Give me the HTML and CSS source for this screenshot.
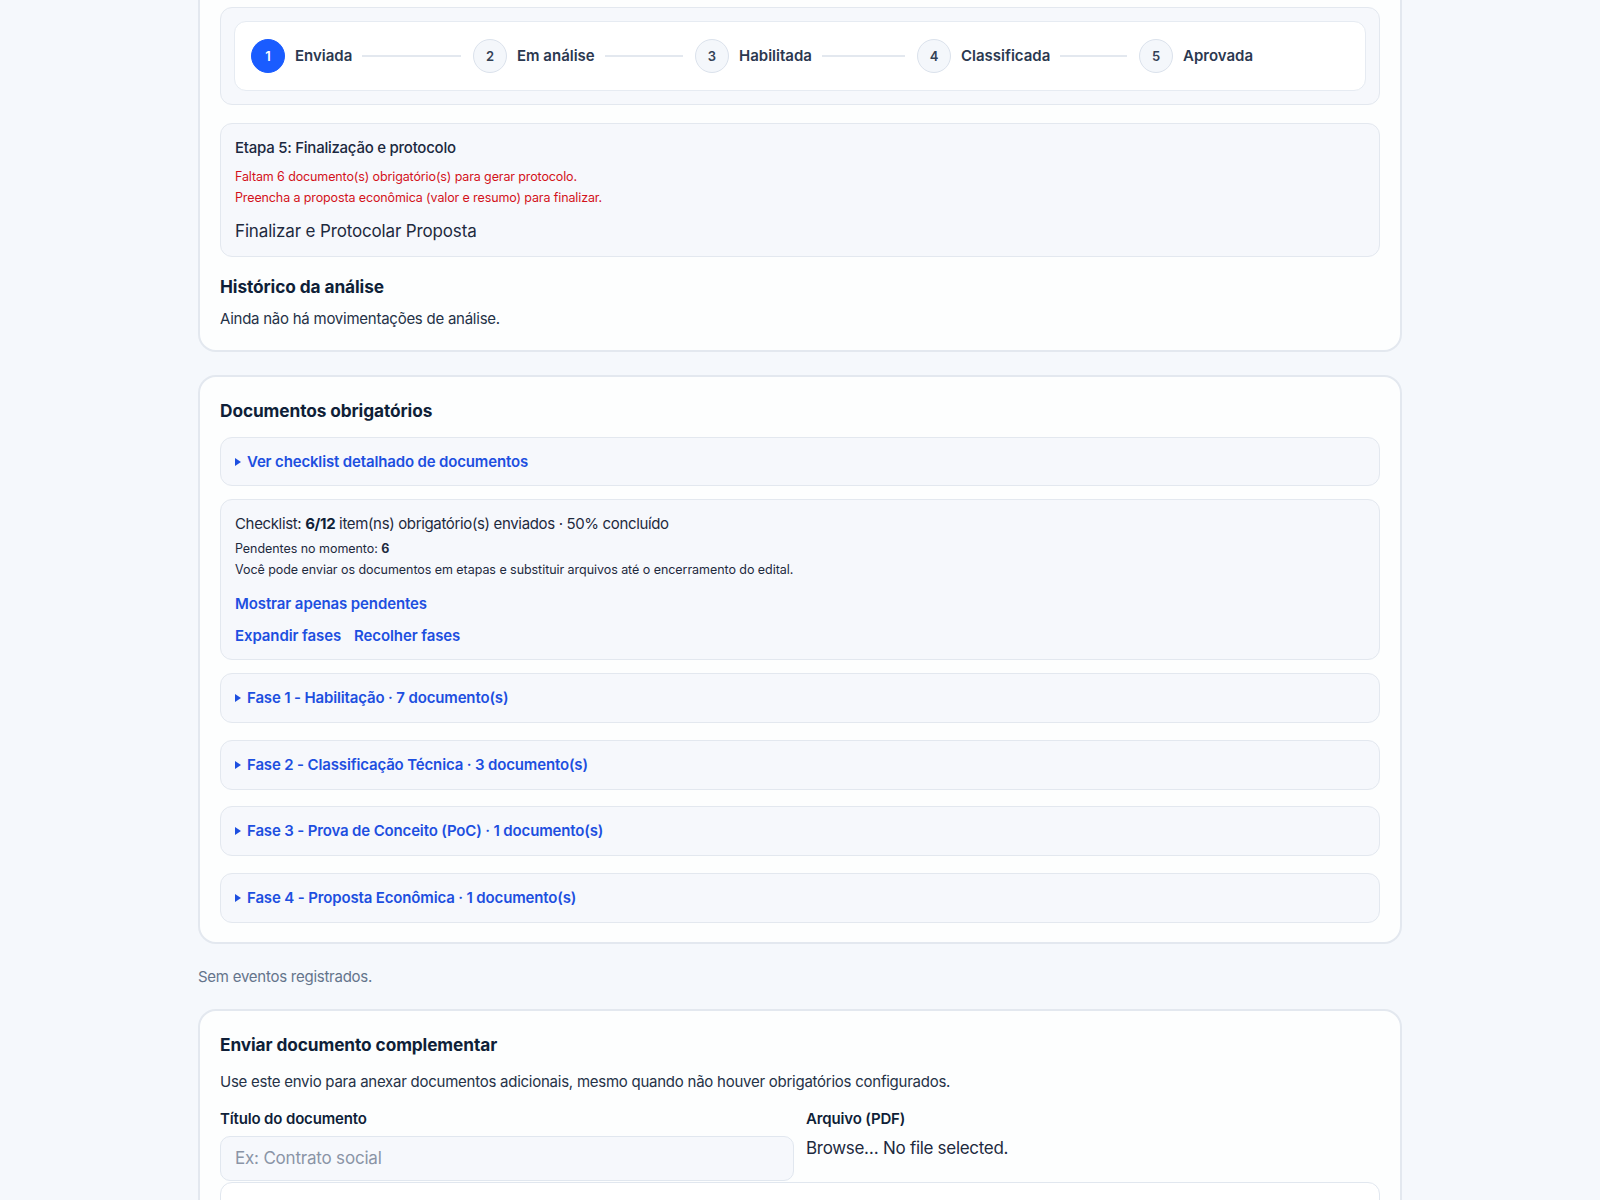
FILE: index.html
```html
<!DOCTYPE html>
<html lang="pt-BR">
<head>
<meta charset="utf-8">
<title>Proposta</title>
<link rel="stylesheet" href="styles.css">
</head>
<body>
<main class="page">
  <section class="card card-status">
    <div class="stepper-wrap">
      <ol class="stepper">
        <li class="step is-current"><span class="step-dot">1</span><span class="step-label">Enviada</span><span class="step-line"></span></li>
        <li class="step"><span class="step-dot">2</span><span class="step-label">Em análise</span><span class="step-line"></span></li>
        <li class="step"><span class="step-dot">3</span><span class="step-label">Habilitada</span><span class="step-line"></span></li>
        <li class="step"><span class="step-dot">4</span><span class="step-label">Classificada</span><span class="step-line"></span></li>
        <li class="step step-last"><span class="step-dot">5</span><span class="step-label">Aprovada</span></li>
      </ol>
    </div>

    <div class="panel finalize">
      <p class="finalize-title">Etapa 5: Finalização e protocolo</p>
      <p class="warn first">Faltam 6 documento(s) obrigatório(s) para gerar protocolo.</p>
      <p class="warn">Preencha a proposta econômica (valor e resumo) para finalizar.</p>
      <button class="plain-btn" type="button">Finalizar e Protocolar Proposta</button>
    </div>

    <h3 class="section-title history-title">Histórico da análise</h3>
    <p class="body-text history-text">Ainda não há movimentações de análise.</p>
  </section>

  <section class="card card-docs">
    <h3 class="section-title">Documentos obrigatórios</h3>

    <details class="panel disclosure first-disclosure">
      <summary>Ver checklist detalhado de documentos</summary>
    </details>

    <div class="panel checklist">
      <p class="checklist-main">Checklist: <strong>6/12</strong> item(ns) obrigatório(s) enviados · 50% concluído</p>
      <p class="small first-small">Pendentes no momento: <strong>6</strong></p>
      <p class="small">Você pode enviar os documentos em etapas e substituir arquivos até o encerramento do edital.</p>
      <div class="link-row first-links"><a class="link" href="#">Mostrar apenas pendentes</a></div>
      <div class="link-row"><a class="link" href="#">Expandir fases</a><a class="link" href="#">Recolher fases</a></div>
    </div>

    <details class="panel disclosure phase first-phase"><summary>Fase 1 - Habilitação · 7 documento(s)</summary></details>
    <details class="panel disclosure phase"><summary>Fase 2 - Classificação Técnica · 3 documento(s)</summary></details>
    <details class="panel disclosure phase"><summary>Fase 3 - Prova de Conceito (PoC) · 1 documento(s)</summary></details>
    <details class="panel disclosure phase"><summary>Fase 4 - Proposta Econômica · 1 documento(s)</summary></details>
  </section>

  <p class="muted events">Sem eventos registrados.</p>

  <section class="card card-upload">
    <h3 class="section-title">Enviar documento complementar</h3>
    <p class="body-text upload-help">Use este envio para anexar documentos adicionais, mesmo quando não houver obrigatórios configurados.</p>
    <div class="form-grid">
      <label class="field">
        <span class="field-label">Título do documento</span>
        <input class="text-input" type="text" placeholder="Ex: Contrato social">
      </label>
      <div class="field">
        <span class="field-label">Arquivo (PDF)</span>
        <span class="file-picker"><span>Browse…</span> <span>No file selected.</span></span>
      </div>
    </div>
    <div class="note-box"></div>
  </section>
</main>
</body>
</html>
```

FILE: styles.css
```css
* { box-sizing: border-box; }

html, body {
  margin: 0;
  padding: 0;
}

body {
  background: #f5f8fc;
  color: #1e293b;
  font-family: Inter, "Noto Sans", "Liberation Sans", sans-serif;
  font-size: 15px;
  line-height: 22px;
  letter-spacing: -0.25px;
}

p { margin: 0; }

.page {
  width: 1204px;
  margin: -17px auto 0;
}

/* cards */
.card {
  background: #fdfefe;
  border: 2px solid #e3e8ef;
  border-radius: 18px;
  padding: 22px 20px 20px;
}

.card-docs { padding-bottom: 19px; }

.card + .card { margin-top: 23px; }

.panel {
  background: #f6f8fc;
  border: 1px solid #e3e8ef;
  border-radius: 12px;
}

.section-title {
  margin: 0;
  font-size: 17.3px;
  line-height: 24px;
  font-weight: 700;
  color: #0f1f38;
  letter-spacing: -0.1px;
}

.body-text { color: #253247; }

/* stepper */
.stepper-wrap {
  background: #f6f8fc;
  border: 1px solid #e3e8ef;
  border-radius: 12px;
  padding: 13px;
}

.stepper {
  list-style: none;
  margin: 0;
  display: flex;
  gap: 12px;
  background: #fff;
  border: 1px solid #e6ebf2;
  border-radius: 12px;
  padding: 17px 16px;
  letter-spacing: 0;
}

.step {
  flex: 1;
  display: flex;
  align-items: center;
  gap: 10px;
  min-width: 0;
}

.step-dot {
  flex: none;
  width: 34px;
  height: 34px;
  border-radius: 50%;
  background: #f4f7fb;
  border: 1.5px solid #dbe2ec;
  display: flex;
  align-items: center;
  justify-content: center;
  font-size: 13px;
  font-weight: 600;
  color: #334155;
}

.is-current .step-dot {
  background: #1a5cff;
  border-color: #1a5cff;
  color: #fff;
}

.step-label {
  font-size: 15px;
  font-weight: 600;
  color: #2b3850;
  white-space: nowrap;
}

.step-line {
  flex: 1;
  height: 2px;
  background: #e3e8ef;
}

/* finalize panel */
.finalize {
  margin-top: 18px;
  padding: 13px 14px;
}

.finalize-title {
  font-weight: 500;
  color: #1b2940;
}

.warn {
  font-size: 12.5px;
  line-height: 21px;
  color: #d3121b;
  letter-spacing: -0.12px;
}

.warn.first { margin-top: 7px; }

.plain-btn {
  display: block;
  margin-top: 11px;
  padding: 0;
  border: 0;
  background: none;
  font: inherit;
  font-size: 17px;
  line-height: 24px;
  letter-spacing: -0.15px;
  color: #1e2a3e;
  cursor: pointer;
}

.history-title { margin-top: 18px; }
.history-text { margin-top: 9px; }

/* documents */
.disclosure summary {
  list-style: none;
  padding: 12.5px 14px;
  font-weight: 600;
  color: #1d4fe0;
  letter-spacing: -0.15px;
  cursor: pointer;
  display: flex;
  align-items: center;
  gap: 6px;
}

.phase summary { padding: 13px 14px; }

.disclosure summary::-webkit-details-marker { display: none; }

.disclosure summary::before {
  content: "";
  width: 0;
  height: 0;
  border-left: 6px solid #1d4fe0;
  border-top: 4px solid transparent;
  border-bottom: 4px solid transparent;
}

.first-disclosure { margin-top: 14px; }

.checklist {
  margin-top: 13px;
  padding: 13px 14px 12px;
}

.checklist-main { color: #1e2a3e; letter-spacing: -0.35px; }
.checklist-main strong { font-weight: 700; color: #0f1f38; }

.small {
  font-size: 12.5px;
  line-height: 21px;
  color: #1e2a3e;
  letter-spacing: -0.05px;
}

.first-small { margin-top: 3px; }
.small strong { font-weight: 700; }

.link-row {
  display: flex;
  gap: 13px;
  margin-top: 10px;
}

.link-row.first-links { margin-top: 13px; }

.link {
  font-weight: 600;
  color: #1d4fe0;
  letter-spacing: -0.1px;
  text-decoration: none;
}

.phase { margin-top: 16.5px; }
.phase.first-phase { margin-top: 13px; }

/* events */
.muted {
  color: #64748b;
}

.events {
  margin: 22px 0 21px;
}

/* upload */
.upload-help { margin-top: 14px; }

.form-grid {
  margin-top: 15px;
  display: grid;
  grid-template-columns: 1fr 1fr;
  gap: 12px;
}

.field {
  display: flex;
  flex-direction: column;
  gap: 6px;
}

.field-label {
  font-weight: 600;
  color: #0f1f38;
  letter-spacing: -0.15px;
}

.text-input {
  height: 45px;
  border: 1px solid #e1e7ef;
  border-radius: 10px;
  background: #f6f8fc;
  padding: 0 14px;
  font: inherit;
  font-size: 17px;
  letter-spacing: -0.2px;
  color: #1e293b;
}

.text-input::placeholder { color: #8a94a6; }

.file-picker {
  font-size: 17px;
  line-height: 24px;
  letter-spacing: -0.3px;
  color: #1e2a3e;
}

.note-box {
  margin-top: 1px;
  height: 60px;
  background: #fff;
  border: 1px solid #e1e7ef;
  border-radius: 12px;
}
```
